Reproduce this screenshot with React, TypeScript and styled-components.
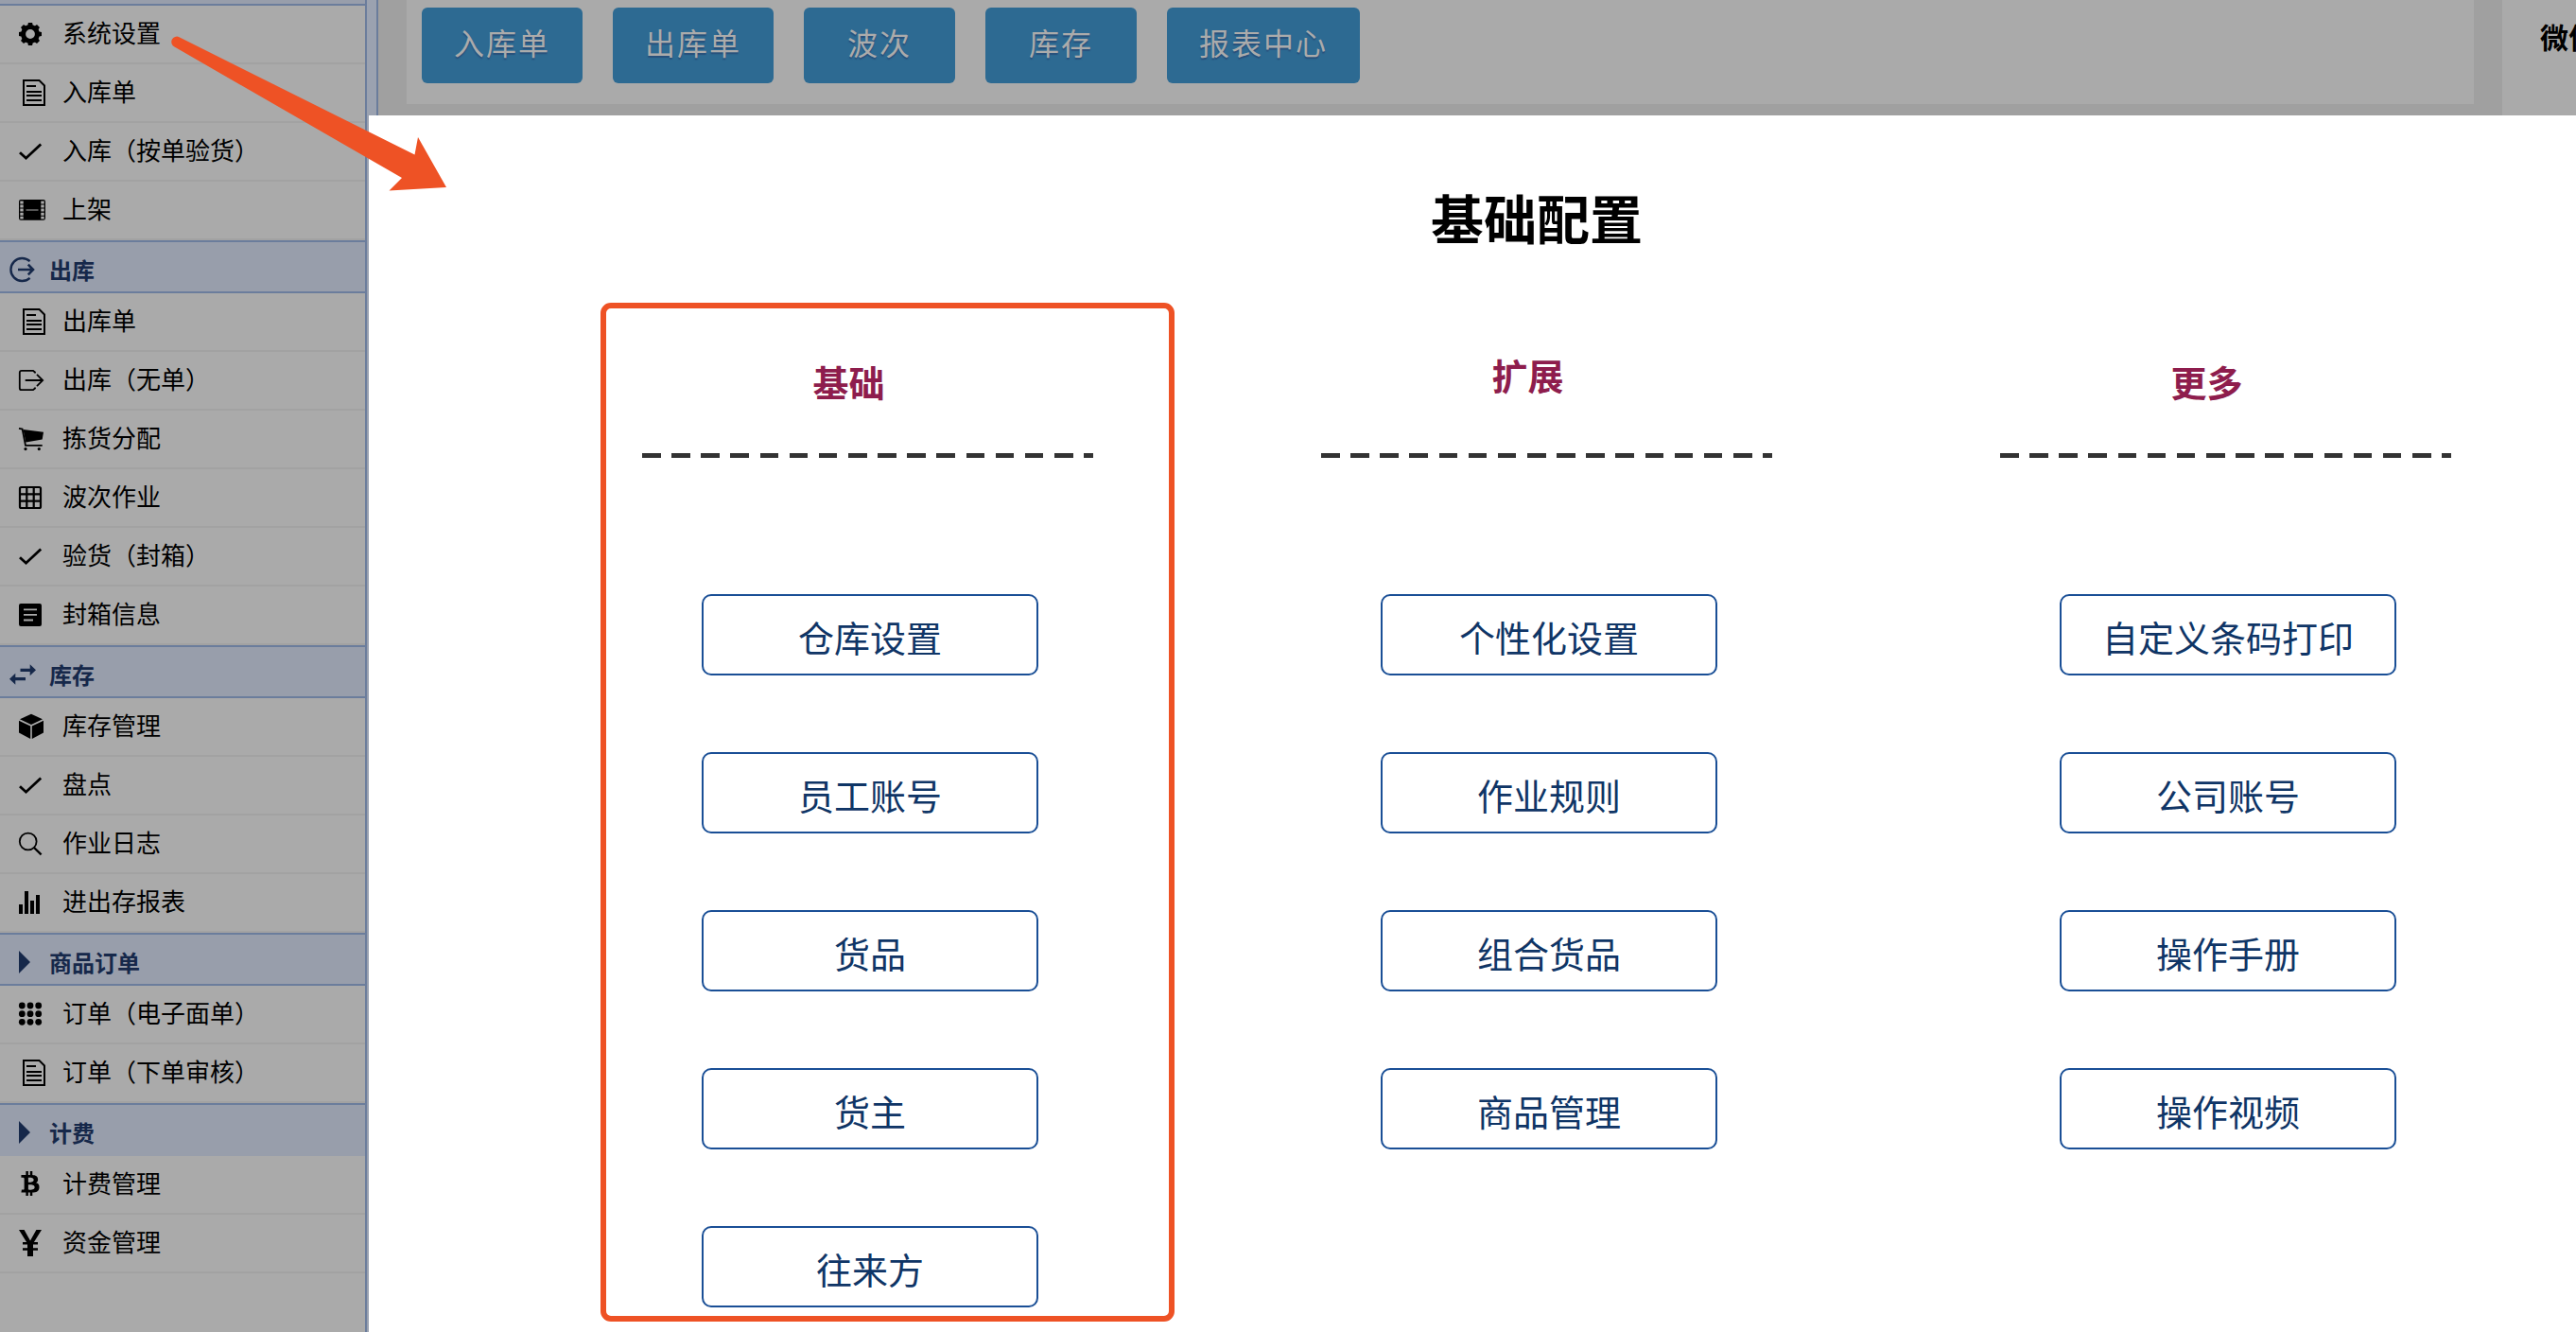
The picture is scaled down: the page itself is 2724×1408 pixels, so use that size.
import React from 'react';
import styled, { createGlobalStyle } from 'styled-components';
import { FaBtc } from 'react-icons/fa';

const GlobalStyle = createGlobalStyle`
  *, *::before, *::after { box-sizing: border-box; }
  body {
    margin: 0;
    font-family: "Noto Sans CJK SC", "Liberation Sans", sans-serif;
    color: #000;
    background: #a0a0a0;
  }
`;

const Page = styled.div`
  position: relative;
  display: flex;
  min-height: 100vh;
  overflow: hidden;
`;

const Sidebar = styled.nav`
  flex: none;
  width: 388px;
  border-right: 2px solid #6b7d9c;
  background: #aaaaaa;
`;

const Splitter = styled.div`
  flex: none;
  width: 12px;
  border-right: 2px solid #6b7d9c;
  background: #9ba2b0;
`;

const SidebarTop = styled.div`
  height: 6px;
  border-bottom: 2px solid #6b7d9c;
  background: #989eab;
`;

const SectionHeader = styled.h2<{ $open?: boolean }>`
  display: flex;
  align-items: center;
  gap: 12px;
  height: 56px;
  margin: 0;
  padding: 6px 0 0 8px;
  border-top: 2px solid #6b7d9c;
  border-bottom: 2px solid ${(p) => (p.$open ? '#989eab' : '#6b7d9c')};
  background: #989eab;
  color: #16284a;
  font-size: 24px;
  font-weight: 700;
  line-height: 32px;
`;

const MenuItem = styled.a`
  display: flex;
  align-items: center;
  gap: 16px;
  height: 62px;
  padding-left: 18px;
  border-bottom: 2px solid #a2a2a2;
  color: #000;
  font-size: 26px;
  line-height: 36px;
  text-decoration: none;
`;

const MenuLabel = styled.span`
  padding-bottom: 4px;
`;

const IconCanvas = styled.svg`
  flex: none;
  width: 32px;
  height: 32px;
  fill: currentColor;
  stroke: none;
`;

const Workspace = styled.main`
  flex: 1;
  display: flex;
  align-items: flex-start;
  gap: 30px;
  min-width: 0;
  padding-left: 30px;
  background: #a0a0a0;
`;

const Toolbar = styled.div`
  flex: 1;
  display: flex;
  gap: 32px;
  padding: 8px 16px 22px;
  background: #aaaaaa;
`;

const ToolbarButton = styled.button`
  min-width: 160px;
  height: 80px;
  padding: 0 34px 8px;
  border: 0;
  border-radius: 6px;
  background: #2d6a92;
  color: #ababab;
  font: inherit;
  font-size: 32px;
  line-height: 48px;
  letter-spacing: 2px;
  text-shadow: 0 2px 1px #28507c;
`;

const SidePanel = styled.aside`
  flex: none;
  align-self: stretch;
  width: 78px;
  padding: 18px 0 0 40px;
  overflow: hidden;
  background: #aaaaaa;
  font-size: 30px;
  font-weight: 700;
  line-height: 40px;
  white-space: nowrap;
`;

const Modal = styled.section`
  position: absolute;
  top: 122px;
  right: 0;
  bottom: 0;
  left: 390px;
  background: #fff;
`;

const Title = styled.h1`
  margin: 0;
  padding: 67px 0 0 136px;
  font-size: 56px;
  font-weight: 700;
  line-height: 80px;
  text-align: center;
`;

const Columns = styled.div`
  display: grid;
  grid-template-columns: repeat(3, 1fr);
  gap: 241px;
  padding: 103px 132px 0 289px;
`;

const ColumnTitle = styled.h3<{ $raised?: boolean }>`
  display: flex;
  align-items: ${(p) => (p.$raised ? 'flex-start' : 'flex-end')};
  justify-content: center;
  height: 55px;
  margin: 0 0 52px;
  padding-right: 40px;
  color: #8e1d4d;
  font-size: 38px;
  font-weight: 700;
  line-height: 48px;
`;

const DashedRule = styled.hr`
  height: 5px;
  margin: 0;
  border: 0;
  background: repeating-linear-gradient(to right, #333 0 4.1%, transparent 4.1% 6.53%);
`;

const ButtonStack = styled.div`
  display: flex;
  flex-direction: column;
  gap: 81px;
  padding: 144px 58px 0 63px;
`;

const OutlineButton = styled.button`
  height: 86px;
  padding: 4px 0 0;
  border: 2px solid #1a4f96;
  border-radius: 10px;
  background: #fff;
  color: #0f3566;
  font: inherit;
  font-size: 38px;
  line-height: 48px;
  white-space: nowrap;
`;

const Highlight = styled.div`
  position: absolute;
  top: 320px;
  left: 635px;
  width: 607px;
  height: 1077px;
  border: 6px solid #ee5225;
  border-radius: 11px;
  pointer-events: none;
`;

const Arrow = styled.svg`
  position: absolute;
  top: 36px;
  left: 180px;
  width: 296px;
  height: 168px;
  fill: #ee5225;
  pointer-events: none;
`;

type IconName =
  | 'gear' | 'doc' | 'check' | 'film' | 'exit' | 'cart' | 'table' | 'note'
  | 'cube' | 'search' | 'bars' | 'dots' | 'btc' | 'yen' | 'circleOut' | 'swap' | 'triangle';

const line = (width: number) => ({ fill: 'none', stroke: 'currentColor', strokeWidth: width });

const drawings: Record<IconName, React.ReactNode> = {
  gear: (
    <>
      <circle cx="14" cy="16" r="7.4" {...line(5)} />
      {[0, 45, 90, 135, 180, 225, 270, 315].map((a) => (
        <path key={a} d="M11.2 7.5 L11.9 4 H16.1 L16.8 7.5Z" transform={`rotate(${a} 14 16)`} />
      ))}
    </>
  ),
  doc: (
    <>
      <path d="M7 3H23.5L29 8.5V29H7Z" {...line(2)} />
      <path d="M10 9H20M10 15H26M10 19H26M10 24H26" {...line(2)} />
    </>
  ),
  check: <path d="M3 17.2L9.5 23.2L25.2 8.4" {...line(2.8)} />,
  film: (
    <>
      <path
        fillRule="evenodd"
        d="M4 5H28a2 2 0 0 1 2 2V24.8a2 2 0 0 1-2 2H4a2 2 0 0 1-2-2V7a2 2 0 0 1 2-2Z
          M3.3 6.4V9.4H6.7V6.4Z M3.3 10.5V13.5H6.7V10.5Z M3.3 14.6V17.6H6.7V14.6Z M3.3 18.7V21.7H6.7V18.7Z M3.3 22.7V25.6H6.7V22.7Z
          M25.3 6.4V9.4H28.7V6.4Z M25.3 10.5V13.5H28.7V10.5Z M25.3 14.6V17.6H28.7V14.6Z M25.3 18.7V21.7H28.7V18.7Z M25.3 22.7V25.6H28.7V22.7Z
          M9.5 15.4V16.6H22.5V15.4Z"
      />
    </>
  ),
  exit: (
    <path
      d="M19 8.5V7.5L17 5.8H4.8Q2.8 5.8 2.8 7.8V24.2Q2.8 26.2 4.8 26.2H17L19 24.5V23.5M8.7 16H27M21 9.8L27.2 16L21 22.2"
      {...line(1.8)}
    />
  ),
  cart: (
    <>
      <path d="M6.5 6.1L28 8.7L26.7 16.4L9.3 19.6Z" />
      <path d="M2 4.8L5.6 5.6L9 22.8H26.7" {...line(1.8)} />
      <circle cx="9" cy="26.6" r="1.6" />
      <circle cx="23.3" cy="26.6" r="1.6" />
    </>
  ),
  table: (
    <>
      <rect x="3" y="5" width="22" height="22" rx="1.5" {...line(2.2)} />
      <path d="M10.3 5V27M17.7 5V27M3 12.3H25M3 19.7H25" {...line(2.2)} />
    </>
  ),
  note: (
    <path
      fillRule="evenodd"
      d="M4 4H24a2 2 0 0 1 2 2V26a2 2 0 0 1-2 2H4a2 2 0 0 1-2-2V6a2 2 0 0 1 2-2Z
        M7 9.4V11.2H21V9.4Z M7 15V16.8H21V15Z M7 20.5V22.4H17V20.5Z"
    />
  ),
  cube: (
    <>
      <path d="M15 2.7L27 8.2L15 14L3 8.2Z" />
      <path d="M2 9.8L14.2 15.6V29L2 22.5Z" />
      <path d="M28 9.8L15.8 15.6V29L28 22.5Z" />
    </>
  ),
  search: (
    <>
      <circle cx="11.7" cy="13.5" r="8.9" {...line(1.8)} />
      <path d="M18 20L25.6 27.3" {...line(2.4)} />
    </>
  ),
  bars: <path d="M2 18H6V28H2ZM8 4H12V28H8ZM14 14H18V28H14ZM20 8H24V28H20Z" />,
  dots: (
    <>
      {[7, 15.7, 24.3].map((y) =>
        [5.3, 14, 22.7].map((x) => <circle key={`${x}-${y}`} cx={x} cy={y} r="3.4" />),
      )}
    </>
  ),
  btc: <FaBtc x="1" y="2" width="21" height="28" />,
  yen: (
    <>
      <path d="M2 2H7.6L14 13.5L20.4 2H26L17 16.5V30H11V16.5Z" />
      <path d="M6 16.2H22M6 22.5H22" {...line(2.6)} />
    </>
  ),
  circleOut: (
    <>
      <path d="M23.6 7.2A12 12 0 1 0 23.6 24.8" {...line(2.4)} />
      <path d="M11 16H26.5M21.8 10.6L27 16L21.8 21.4" {...line(2.6)} />
    </>
  ),
  swap: (
    <>
      <path d="M13.5 9.7H23.7V5.3L30 11.3L23.7 17.3V12.9H13.5Z" />
      <path d="M19 19.1H8.3V14.7L2 20.7L8.3 26.7V22.3H19Z" />
    </>
  ),
  triangle: <path d="M12 4L24 16L12 28Z" />,
};

const Icon = ({ name }: { name: IconName }) => (
  <IconCanvas viewBox="0 0 32 32" aria-hidden="true">
    {drawings[name]}
  </IconCanvas>
);

interface Section {
  title?: string;
  icon?: IconName;
  open?: boolean;
  items: [IconName, string][];
}

const sections: Section[] = [
  { items: [['gear', '系统设置'], ['doc', '入库单'], ['check', '入库（按单验货）'], ['film', '上架']] },
  {
    title: '出库',
    icon: 'circleOut',
    items: [
      ['doc', '出库单'], ['exit', '出库（无单）'], ['cart', '拣货分配'],
      ['table', '波次作业'], ['check', '验货（封箱）'], ['note', '封箱信息'],
    ],
  },
  {
    title: '库存',
    icon: 'swap',
    items: [['cube', '库存管理'], ['check', '盘点'], ['search', '作业日志'], ['bars', '进出存报表']],
  },
  { title: '商品订单', icon: 'triangle', items: [['dots', '订单（电子面单）'], ['doc', '订单（下单审核）']] },
  { title: '计费', icon: 'triangle', open: true, items: [['btc', '计费管理'], ['yen', '资金管理']] },
];

const shortcuts = ['入库单', '出库单', '波次', '库存', '报表中心'];

const columns = [
  { title: '基础', raised: false, actions: ['仓库设置', '员工账号', '货品', '货主', '往来方'] },
  { title: '扩展', raised: true, actions: ['个性化设置', '作业规则', '组合货品', '商品管理'] },
  { title: '更多', raised: false, actions: ['自定义条码打印', '公司账号', '操作手册', '操作视频'] },
];

export default function App() {
  return (
    <Page>
      <GlobalStyle />
      <Sidebar>
        <SidebarTop />
        {sections.map((section, i) => (
          <div key={i}>
            {section.title && section.icon && (
              <SectionHeader $open={section.open}>
                <Icon name={section.icon} />
                {section.title}
              </SectionHeader>
            )}
            {section.items.map(([icon, label]) => (
              <MenuItem key={label} href="#">
                <Icon name={icon} />
                <MenuLabel>{label}</MenuLabel>
              </MenuItem>
            ))}
          </div>
        ))}
      </Sidebar>
      <Splitter />
      <Workspace>
        <Toolbar>
          {shortcuts.map((label) => (
            <ToolbarButton key={label} type="button">{label}</ToolbarButton>
          ))}
        </Toolbar>
        <SidePanel>微信</SidePanel>
      </Workspace>
      <Modal>
        <Title>基础配置</Title>
        <Columns>
          {columns.map((column) => (
            <div key={column.title}>
              <ColumnTitle $raised={column.raised}>{column.title}</ColumnTitle>
              <DashedRule />
              <ButtonStack>
                {column.actions.map((label) => (
                  <OutlineButton key={label} type="button">{label}</OutlineButton>
                ))}
              </ButtonStack>
            </div>
          ))}
        </Columns>
      </Modal>
      <Highlight />
      <Arrow viewBox="180 36 296 168" aria-hidden="true">
        <path d="M189.5 39.2L438.5 163.5L442 145L472 198L411.5 201.5L425 188L184.5 49.5A5.6 5.6 0 0 1 189.5 39.2Z" />
      </Arrow>
    </Page>
  );
}
